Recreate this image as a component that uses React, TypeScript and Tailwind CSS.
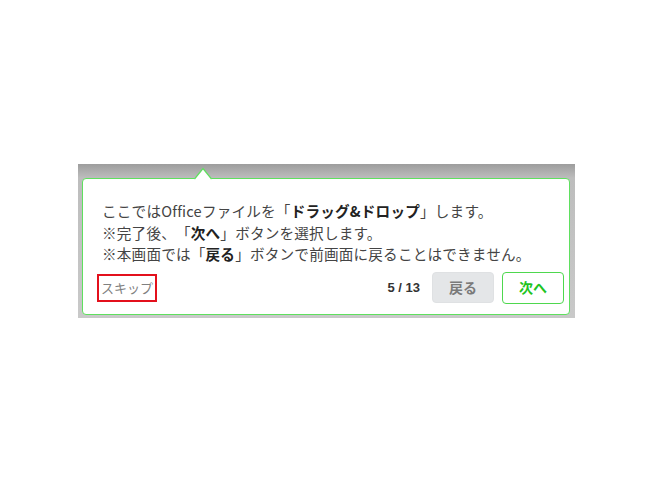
export default function App() {
  const jp = { fontFamily: '"Noto Sans CJK JP", "Noto Sans", sans-serif' };
  return (
    <div className="w-[655px] h-[492px] bg-white pt-[164px] pl-[78px]">
      <div className="w-[497px] h-[154px] pt-[14px] pl-[4px] pr-[5px] pb-[3px] bg-[linear-gradient(to_bottom,#9d9d9d,#bdbdbd_14px,#c9c9c9)]">
        <div
          className="relative w-[488px] h-[137px] bg-white border border-[#5fe05f] rounded-[4px] flex flex-col [text-spacing-trim:space-all]"
          style={jp}
        >
          <svg
            className="absolute left-[111px] top-[-12px]"
            width="18"
            height="13"
            viewBox="0 0 18 13"
          >
            <path d="M0 12.5 L9 1.5 L18 12.5 Z" fill="white" />
            <path d="M0.5 12 L9 1.5 L17.5 12" fill="none" stroke="#5fe05f" strokeWidth="1.2" />
          </svg>
          <div className="pt-[21px] px-[19px] text-[14.6px] leading-[21.5px] tracking-[0.2px] text-[#444]">
            <div>
              ここではOfficeファイルを「<b className="font-bold text-[#222]">ドラッグ&amp;ドロップ</b>」します。
            </div>
            <div>
              ※完了後、「<b className="font-bold text-[#222]">次へ</b>」ボタンを選択します。
            </div>
            <div>
              ※本画面では「<b className="font-bold text-[#222]">戻る</b>」ボタンで前画面に戻ることはできません。
            </div>
          </div>
          <div className="mt-[7px] pl-[14px] pr-[5px] flex items-center">
            <div className="w-[60px] h-[28px] border-2 border-[#e3101c] flex items-center justify-center text-[13px] text-[#808080]">
              スキップ
            </div>
            <div className="flex-1" />
            <div
              className="text-[13px] font-bold text-[#333] mr-[12px]"
              style={{ fontFamily: '"Liberation Sans", Arial, sans-serif' }}
            >
              5 / 13
            </div>
            <div className="w-[62px] h-[31px] rounded-[4px] bg-[#e4e6e8] border border-[#dfe1e3] flex items-center justify-center text-[14px] font-bold text-[#7a7a7a]">
              戻る
            </div>
            <div className="ml-[8px] w-[62px] h-[32px] rounded-[4px] bg-white border border-[#4ed84e] flex items-center justify-center text-[14px] font-bold text-[#1fc41f]">
              次へ
            </div>
          </div>
        </div>
      </div>
    </div>
  );
}
